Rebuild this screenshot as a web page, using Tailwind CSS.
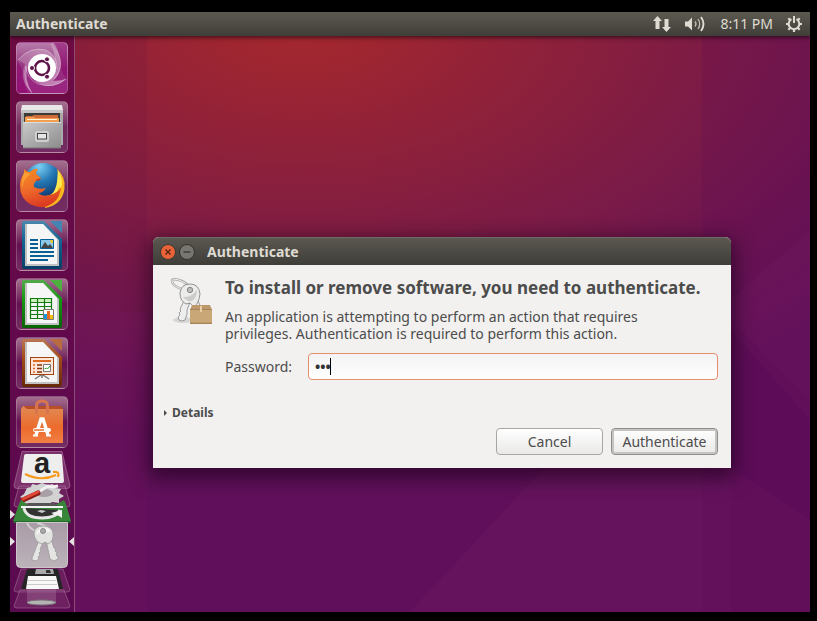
<!DOCTYPE html>
<html lang="en">
<head>
<meta charset="utf-8">
<meta name="viewport" content="width=device-width, initial-scale=1">
<title>Authenticate</title>
<script src="https://cdn.jsdelivr.net/npm/@tailwindcss/browser@4"></script>
</head>
<body class="bg-black font-['Noto_Sans','Open_Sans',sans-serif] text-sm text-[#4c4c4c]">
<div class="flex h-screen flex-col pt-3 pr-[7px] pb-[9px] pl-[10px]">
  <header class="relative z-10 flex h-6 shrink-0 items-center justify-between bg-linear-to-b from-[#5c5a50] to-[#403e39] pr-[7px] pl-1.5 text-[#dfdbd2] shadow-[0_1px_5px_rgba(0,0,0,.7)]">
    <h1 class="font-bold">Authenticate</h1>
    <div class="flex items-center">
      <button type="button" aria-label="Network" class="mr-3"><svg class="block h-5 w-5" viewBox="0 0 20 20" fill="currentColor"><path d="M5.500 2 10 7H7.500v8h-4V7H1zM14.500 18 10 13h2.500V5h4v8H19z"/></svg></button>
      <button type="button" aria-label="Sound" class="mr-3.5"><svg class="block h-5 w-[22px]" viewBox="0 0 22 20" fill="none" stroke="currentColor"><path fill="currentColor" stroke="none" d="M1 7.500h3l4-4v13l-4-4H1z"/><path stroke-width="1.300" d="M11 7.500q2 2.500 0 5M14 5q3.500 5 0 10" opacity=".8"/><path stroke-width="1.900" d="M17 3q5 7 0 14"/></svg></button>
      <time class="mr-3">8:11 PM</time>
      <button type="button" aria-label="Session menu"><svg class="block h-[18px] w-[18px]" viewBox="0 0 18 18" fill="none" stroke="currentColor"><path stroke-width="2" d="M6.500 4.200a5.300 5.300 0 1 0 5 0M9 1v7"/><path stroke-width="2.200" d="M3.800 9H1M17 9h-2.800M9 14v3M5.300 12.700l-2 2M12.700 12.700l2 2M5.300 5.300l-2-2M12.700 5.300l2-2"/></svg></button>
    </div>
  </header>

  <div class="relative flex min-h-0 grow overflow-hidden bg-[#60105a]">
    <svg class="absolute inset-0 h-full w-full" viewBox="10 36 800 576" preserveAspectRatio="none" aria-hidden="true">
      <defs>
        <radialGradient id="sky" gradientUnits="userSpaceOnUse" cx="0" cy="0" r="750" gradientTransform="translate(300 20) scale(1 .57)">
          <stop offset="0" stop-color="#a42730"/><stop offset=".1" stop-color="#9f2630"/><stop offset=".22" stop-color="#962336"/><stop offset=".4" stop-color="#881f3e"/><stop offset=".6" stop-color="#791a48"/><stop offset=".8" stop-color="#6b1453"/><stop offset="1" stop-color="#60105a"/>
        </radialGradient>
      </defs>
      <path fill="url(#sky)" d="M10 36h800v576H10z"/>
      <path fill="#5d0f45" fill-opacity=".13" d="M10 36h137v576H10z"/>
      <path fill="#8a1a70" fill-opacity=".14" d="M10 312h137v300H10z"/>
      <path fill="#550a55" fill-opacity=".15" d="M702 36h108v576H702z"/>
      <path fill="#80206a" fill-opacity=".18" d="M410 612 570 440 810 230V420L731 330V468L810 520V612z"/>
      <path fill="#5c0a58" fill-opacity=".22" d="M731 320 810 400V612H731z"/>
    </svg>

    <nav aria-label="Launcher" class="relative flex w-[65px] shrink-0 flex-col items-center border-r border-[#8c4a78] bg-linear-to-b from-[#6d0b41] via-[#62094c] to-[#5a0a50] pt-1.5">
      <div class="flex flex-col gap-[7px]">
        <button type="button" aria-label="Search your computer" class="block h-[52px] w-[52px] overflow-hidden rounded-[5px] border border-white/20 bg-linear-to-b from-[#b77caa] via-[#93307f] to-[#9b2380]">
          <svg class="block h-[50px] w-[50px]" viewBox="1 1 50 50"><defs><linearGradient id="swirl" x2="1" y2="1"><stop stop-color="#fff" stop-opacity=".1"/><stop offset="1" stop-color="#fff" stop-opacity=".5"/></linearGradient></defs><path fill="#8b0069" fill-opacity=".5" d="M38 1h13v36Q44 30 44 18 43 8 38 1zM1 18q6 10 8 20 0 8 3 13H1z"/><path fill="url(#swirl)" d="M2 18Q14 4 30 8 42 14 40 28L26 12Q14 12 12 26 8 36 16 51 2 38 9 22zM34 1Q50 16 42 33 34 46 20 40L38 32Q42 16 34 1zM50 37Q34 50 19 39L33 38Q42 40 50 37z"/><path fill="none" stroke="#fff" stroke-opacity=".35" d="M2 18Q14 4 30 8 42 14 41 27M36 1Q52 22 38 37M50 37Q38 47 22 42 10 36 10 24M10 24Q6 38 16 51"/><circle cx="26" cy="26" r="14" fill="#fff"/><circle cx="26" cy="26" r="7" fill="none" stroke="#5e1448" stroke-width="2.600"/><g fill="#5e1448" stroke="#fff" stroke-width="1"><circle cx="16" cy="26" r="2.500"/><circle cx="31" cy="17.300" r="2.500"/><circle cx="31" cy="34.700" r="2.500"/></g></svg>
        </button>
        <button type="button" aria-label="Files" class="block h-[52px] w-[52px] overflow-hidden rounded-[5px] border border-white/20 bg-linear-to-b from-[#a5708f] via-[#70285c] to-[#732d62]">
          <svg class="block h-[50px] w-[50px]" viewBox="1 1 50 50"><defs><linearGradient id="steel" x2="1" y2="1"><stop stop-color="#c9c9c9"/><stop offset="1" stop-color="#8c8c8c"/></linearGradient></defs><path fill="#aaa" d="M5 8h42v36H5z"/><path fill="#e8e8e8" d="M6 4h40l1 5H5z"/><path fill="#c5c5c5" d="M5 9h42v3H5z"/><path fill="#3c3c38" d="M8 12h36v11H8z"/><path fill="#d06a38" d="M10 15h6l2-1h24v7H10z"/><path fill="#f0a050" d="M9 16h9l1 1h24v5H9z"/><path stroke="#fff2d8" d="M11 18.500h30"/><path fill="url(#steel)" d="M7 22h38v25H7z"/><path stroke="#ddd" d="M7 21.500h38"/><path stroke="#777" d="M7 47h38"/><rect x="19" y="30" width="14" height="11" rx="2" fill="#cfcfcf"/><rect x="21.500" y="32.500" width="9" height="5.500" fill="#e6e6e6" stroke="#444"/></svg>
        </button>
        <button type="button" aria-label="Firefox" class="block h-[52px] w-[52px] overflow-hidden rounded-[5px] border border-white/20 bg-linear-to-b from-[#a5708f] via-[#70285c] to-[#732d62]">
          <svg class="block h-[50px] w-[50px]" viewBox="1 1 50 50"><defs><radialGradient id="globe" cx=".4" cy=".1" r=".9"><stop stop-color="#7ed0f4"/><stop offset=".45" stop-color="#2378b5"/><stop offset="1" stop-color="#0b2d63"/></radialGradient><linearGradient id="fox" y2="1" x2=".3"><stop stop-color="#f58a20"/><stop offset=".5" stop-color="#f0702a"/><stop offset="1" stop-color="#dd3c22"/></linearGradient></defs><circle cx="27" cy="22" r="19" fill="url(#globe)"/><path fill="#f9b51d" d="M41 9Q50 17 48.500 29Q46 45 29 48L30 36Q40 34 42 25Q43 15 41 9z"/><path fill="#ffe650" d="M42 10Q48 20 45 29L43 27Q41 35 34 37Q40 30 41 22z"/><path fill="url(#fox)" d="M8 9Q10 12 14 12Q18 8 22 9Q20 12 20 14L25 18Q24 20 20 21Q17 24 18 27Q23 30 30 28Q27 33 22 33Q26 37 34 35Q42 33 45 27Q44 38 37 43Q26 51 14 44Q4 38 4 26Q4 18 8 14z"/><path fill="#ffb13c" fill-opacity=".6" d="M8 12Q5 20 6 28Q8 18 15 14z"/><path fill="#c33c1a" d="M19 20l6-2-2 3z"/></svg>
        </button>
        <button type="button" aria-label="LibreOffice Writer" class="block h-[52px] w-[52px] overflow-hidden rounded-[5px] border border-white/20 bg-linear-to-b from-[#a5708f] via-[#651052] to-[#732d62]">
          <svg class="block h-[50px] w-[50px]" viewBox="1 1 50 50"><defs><linearGradient id="blue" x2="0" y2="1"><stop stop-color="#4b87ad"/><stop offset=".4" stop-color="#126594"/><stop offset="1" stop-color="#063f66"/></linearGradient></defs><path fill="url(#blue)" d="M8 2h20l18 18v28q0 2-2 2H8q-2 0-2-2V4q0-2 2-2z"/><path fill="#c2c2c2" d="M9 5h18l16 16v26H9z"/><path fill="#f6f6f6" d="M11 5h16l14 15v25H11z"/><path fill="#4384b3" d="M34 2h12v12z"/><path stroke="#086194" stroke-width="2" d="M14 21h8M14 25h8M14 29h8M14 33h24M14 37h24M14 41h18"/><path fill="#8bc8e5" stroke="#086194" d="M24.500 20.500h13v9h-13z"/><path fill="#444" d="m25 29 4-6 3 4 2-2 3 4z"/><path fill="#ecc830" d="M34 21h3v3h-2z"/></svg>
        </button>
        <button type="button" aria-label="LibreOffice Calc" class="block h-[52px] w-[52px] overflow-hidden rounded-[5px] border border-white/20 bg-linear-to-b from-[#a5708f] via-[#651052] to-[#732d62]">
          <svg class="block h-[50px] w-[50px]" viewBox="1 1 50 50"><defs><linearGradient id="green" x2="0" y2="1"><stop stop-color="#55a84c"/><stop offset=".4" stop-color="#159911"/><stop offset="1" stop-color="#086305"/></linearGradient></defs><path fill="url(#green)" d="M8 2h20l18 18v28q0 2-2 2H8q-2 0-2-2V4q0-2 2-2z"/><path fill="#c2c2c2" d="M9 5h18l16 16v26H9z"/><path fill="#f6f6f6" d="M11 5h16l14 15v25H11z"/><path fill="#4daf40" d="M34 2h12v12z"/><path fill="#cdf0bd" d="M14 20h22v5H14z"/><path fill="none" stroke="#107c0e" stroke-width="1.200" d="M14.500 20.500h21v20h-21zM21.500 20v21M28.500 20v21M14 24.500h22M14 28.500h22M14 32.500h22M14 36.500h22"/><path fill="#fff" stroke="#777" d="M27.500 31.500h10v10h-10z"/><path fill="#1999dc" d="M28 36h3v5h-3z"/><path fill="#e66a20" d="M31 33h3v8h-3z"/><path fill="#f4bf13" d="M34 37h3v4h-3z"/></svg>
        </button>
        <button type="button" aria-label="LibreOffice Impress" class="block h-[52px] w-[52px] overflow-hidden rounded-[5px] border border-white/20 bg-linear-to-b from-[#a5708f] via-[#651052] to-[#732d62]">
          <svg class="block h-[50px] w-[50px]" viewBox="1 1 50 50"><defs><linearGradient id="brown" x2="0" y2="1"><stop stop-color="#ba7653"/><stop offset=".4" stop-color="#a34a18"/><stop offset="1" stop-color="#642807"/></linearGradient></defs><path fill="url(#brown)" d="M8 2h20l18 18v28q0 2-2 2H8q-2 0-2-2V4q0-2 2-2z"/><path fill="#c2c2c2" d="M9 5h18l16 16v26H9z"/><path fill="#f6f6f6" d="M11 5h16l14 15v25H11z"/><path fill="#b86a40" d="M34 2h12v12z"/><path stroke="#777" stroke-width="1.500" d="m25 38-6 4M27 38l6 4M26 38v3"/><rect x="14.500" y="20.500" width="23" height="17" fill="#fde6d8" stroke="#a3440e"/><path stroke="#de6b23" stroke-width="2" d="M17 24h18"/><path stroke="#de6b23" stroke-width="1.500" d="M17 28h2M17 31.500h2M17 35h2"/><path stroke="#87350b" stroke-width="1.500" d="M21 28h5M21 31.500h5M21 35h5"/><path fill="#fff" stroke="#777" d="M27.500 27.500h7v7h-7z"/><path fill="none" stroke="#28a428" d="m28.500 32 2-1 1 1 2.500-3"/></svg>
        </button>
        <button type="button" aria-label="Ubuntu Software" class="block h-[52px] w-[52px] overflow-hidden rounded-[5px] border border-white/20 bg-linear-to-b from-[#a5708f] via-[#651052] to-[#732d62]">
          <svg class="block h-[50px] w-[50px]" viewBox="1 1 50 50"><defs><linearGradient id="bag" x2="0" y2="1"><stop stop-color="#e08a55"/><stop offset=".6" stop-color="#ed6b2c"/><stop offset="1" stop-color="#f08045"/></linearGradient></defs><path fill="#b94f28" d="M7 10h38l2 4H5z"/><path fill="url(#bag)" d="M5 13h42v34H5zM7 10l4 3H5z"/><path fill="none" stroke="#d87550" stroke-width="3" d="M20.500 18V10q0-5 5.500-5t5.500 5v8"/><path fill="none" stroke="#fff" stroke-width="3.500" d="m20 39 5-16h2l5 16"/><path stroke="#fff" stroke-width="4" stroke-linecap="round" d="M19 34h14"/><path stroke="#ed6b2c" stroke-width="1.300" d="M18 34h10"/><path stroke="#fff" stroke-width="2" d="M17 39.500h5M30 39.500h5"/></svg>
        </button>
      </div>
      <div class="mt-0.5 flex w-16 flex-col">
        <button type="button" aria-label="Amazon" class="relative block h-10"><svg class="block h-10 w-16 overflow-visible" viewBox="10 450 64 40"><path fill="#9a5588" fill-opacity=".5" stroke="#b07ba0" stroke-opacity=".6" d="M22 451.500h40l8 34q0 3-3 3H17q-3 0-3-3z"/><path fill="#eee" d="M26 454h35q1 0 1 2l2 25q0 2-2 2H23q-2 0-2-2l3-25q0-2 2-2z"/><text x="42" y="473" text-anchor="middle" font-family="Liberation Sans, sans-serif" font-weight="700" font-size="29" fill="#222">a</text><path fill="none" stroke="#f79a1c" stroke-width="2.200" d="M25 474q16 8 31 1M53 472q7-1 5 5"/></svg></button>
        <button type="button" aria-label="System Settings" class="relative -mt-2.5 block h-7"><svg class="block h-7 w-16" viewBox="10 480 64 28"><path fill="#8a4478" fill-opacity=".35" stroke="#b07ba0" stroke-opacity=".55" d="M19 486h46l5 18q0 3-3 3H17q-3 0-3-3z"/><path fill="#d2d2d2" d="m27 488 4-1 1-3 5 1 5-2 6 2 5-1 2 4 6 1-2 4 5 3-5 3v4l-7-1-5 4-6-2-6 2-5-3-7 1 1-5-4-2 4-3z"/><ellipse cx="44" cy="493" rx="9" ry="4" fill="#a8a0a6"/><path stroke="#8e1c16" stroke-width="5" stroke-linecap="round" d="m23 500 15-7"/><path stroke="#e14838" stroke-width="3" stroke-linecap="round" d="m23 499 15-7"/><path fill="none" stroke="#f2f2f2" stroke-width="3" d="m40 491 8-5 4 1 6-1"/></svg></button>
        <button type="button" aria-label="Software Updater" class="relative -mt-[11px] block h-[27px]"><svg class="block h-[27px] w-16" viewBox="10 497 64 27"><path fill="#37863a" d="m19 504 2-4 6 4h30l7-4 2 4 5 17H13z"/><path fill="#246c2b" d="M14 521h56l1 2H13z"/><path fill="#333" stroke="#e8e8e8" stroke-width="3" d="M24 508q2 10 18 10 14 0 18-8"/><path fill="#555" d="M30 503h24l7 4H23z"/><path fill="#ccc" d="m37 511 4-1 5 1-4 2z"/><path stroke="#f2f2f2" stroke-width="2" d="M21 507h42"/><path fill="#f2f2f2" d="m51 513 11-3v8l-3-2z"/><path fill="#e5e1e2" d="m10 510 5 4.500-5 4.500z"/></svg></button>
        <button type="button" aria-label="Authenticate window" class="relative -mt-0.5 block h-[46px]"><svg class="block h-[46px] w-16" viewBox="10 522 64 46"><defs><linearGradient id="active" x2="0" y2="1"><stop stop-color="#a99ba8"/><stop offset="1" stop-color="#bcb3b9"/></linearGradient></defs><path fill="url(#active)" stroke="#cec4cb" d="M16.500 522.500h51v41q0 4-4 4h-43q-4 0-4-4z"/><path fill="none" stroke="#d2cfd0" stroke-width="2" d="M46 531q-15 2-19-8M50 529q-8-5-13-6"/><path fill="#e4e4e2" stroke="#999" stroke-width=".8" d="m39 540-7 18v2l4 1 3-2-1-2 2-2-1-2 2-2-1-2 5-10zM46 540l4 19 4 2 4-2v-2l-2-2 1-2-2-2 1-2-2-1-3-9z"/><path fill="#e2e2e0" stroke="#999" stroke-width=".8" d="M34 534q0-8 9-8t10 7q1 8-5 11l-3-2-3 2q-7-2-8-10z"/><path fill="#f5f5f5" d="M36 535a8 8 0 0 1 15-3q-9-1-15 3z"/><circle cx="43" cy="531" r="2.500" fill="#aaa" stroke="#888"/><path fill="#e5e1e2" d="m10 537 5 4.500-5 4.500zM74 537l-5 4.500 5 4.500z"/></svg></button>
        <button type="button" aria-label="Floppy disk" class="relative block h-[25px]"><svg class="block h-[25px] w-16" viewBox="10 568 64 25"><path fill="#8a4478" fill-opacity=".35" stroke="#b07ba0" stroke-opacity=".5" d="M21 569h42l7 21q0 2-3 2H17q-3 0-3-2z"/><path fill="#262626" d="M27 569h31l5 20H21z"/><path fill="#aaa" d="M36 569h17l1 5H35z"/><path fill="#333" d="M46 570h4l1 3h-5z"/><path fill="#f8f8f6" d="M28 576h28l3 13H26z"/><path stroke="#ccc" d="M28 580.500h28M27 584.500h30"/></svg></button>
        <button type="button" aria-label="Trash" class="relative -mt-1 block h-5"><svg class="block h-5 w-16" viewBox="10 589 64 20"><path fill="#8a4478" fill-opacity=".4" stroke="#b07ba0" stroke-opacity=".5" d="M20 590h44l6 16q0 2-3 2H17q-3 0-3-2z"/><path fill="#b78aad" fill-opacity=".3" d="M27 589h29v14H27z"/><ellipse cx="41.500" cy="602.500" rx="14.500" ry="2.500" fill="#b5b2b4" stroke="#77707a"/></svg></button>
      </div>
    </nav>

    <main class="relative grow">
      <section role="dialog" aria-labelledby="dialog-title" class="absolute top-[201px] left-[78px] w-[578px] rounded-t-md bg-[#f2f1f0] shadow-[0_6px_20px_4px_rgba(20,0,20,.6)]">
        <div class="flex h-7 items-center rounded-t-md border-t border-[#6d6b63] bg-linear-to-b from-[#5a5850] to-[#3f3d38] pl-[7px] text-[#dfdbd2]">
          <button type="button" aria-label="Close" class="mr-[3px]"><svg class="block h-4 w-4" viewBox="0 0 16 16"><circle cx="8" cy="8" r="7.500" fill="#ea6238" stroke="#3a3834"/><path stroke="#4a2014" stroke-width="1.200" d="m5.500 5.500 5 5M10.500 5.500l-5 5"/></svg></button>
          <button type="button" aria-label="Minimize" class="mr-3"><svg class="block h-4 w-4" viewBox="0 0 16 16"><circle cx="8" cy="8" r="7.500" fill="#777670" stroke="#33322e"/><path stroke="#33322e" stroke-width="1.200" d="M4.500 8h7"/></svg></button>
          <h2 id="dialog-title" class="font-bold">Authenticate</h2>
        </div>
        <form class="pt-[11px] pr-[13px] pb-[13px] pl-[11px]">
          <div class="flex">
            <svg class="mr-3 h-[50px] w-[49px] shrink-0" viewBox="164 276 49 50" aria-hidden="true"><ellipse cx="183" cy="320" rx="10" ry="3" fill="#bbb" opacity=".5"/><path fill="none" stroke="#a8a8a4" stroke-width="2.400" d="M189 287q-3-5-10-7-7-2-7 1 0 4 7 7 4 2 9 1"/><path fill="none" stroke="#eee" d="M189 287q-3-5-10-7-7-2-7 1 0 4 7 7 4 2 9 1"/><path fill="#eee" stroke="#888" stroke-width=".8" d="m184 301-3 6-1 3 1 1-2 2 1 2-2 2 1 3 3 1 3-1 2-6v-4l3-8zM192 300l8 18h5l-8-20z"/><path fill="#ececea" stroke="#888" stroke-width=".9" d="M180 293q1-9 10-9t10 10q-1 9-6 13l-4-4-4 1q-6-3-6-11z"/><path fill="#ccc" d="M183 297q8 1 14-7 0 8-5 11-5 1-9-4z"/><circle cx="190" cy="290" r="2.700" fill="#bbb" stroke="#888"/><path fill="#bd986a" d="m192 305h18l2 5v14h-22v-14z"/><path fill="#caa777" d="M190 310h22v12h-22z"/><path stroke="#a7855a" d="M190 309.500h22M190 323.500h22"/><path stroke="#e8cfa8" stroke-width="2" d="M201 306v6"/></svg>
            <div class="grow">
              <h3 class="text-[17px] leading-6 font-bold">To install or remove software, you need to authenticate.</h3>
              <p class="mt-2 leading-[17px]">An application is attempting to perform an action that requires<br>privileges. Authentication is required to perform this action.</p>
              <div class="mt-[11px] flex items-center">
                <label for="password" class="w-[83px]">Password:</label>
                <div class="relative grow">
                  <input id="password" type="password" value="abc" class="block h-[27px] w-full rounded-[4px] border border-[#e58f6e] bg-linear-to-b from-[#f3f3f3] to-white px-1.5 font-bold text-[#333] outline-none">
                  <span class="absolute top-[5px] left-[22px] h-[17px] w-px bg-black"></span>
                </div>
              </div>
            </div>
          </div>
          <button type="button" aria-expanded="false" class="mt-[25px] flex h-4 items-center gap-[5px] text-xs font-bold"><svg class="block h-1.5 w-[3px]" viewBox="0 0 3 6" fill="currentColor"><path d="m0 0 3 3-3 3z"/></svg>Details</button>
          <div class="mt-[7px] flex justify-end gap-2">
            <button type="button" class="h-[27px] w-[107px] rounded-[4px] border border-[#a9a7a4] bg-linear-to-b from-white to-[#eae9e8]">Cancel</button>
            <button type="submit" class="h-[27px] w-[107px] rounded-[4px] border border-[#8f8e8c] bg-linear-to-b from-white to-[#eae9e8] shadow-[inset_0_0_0_2px_#c4c4c4]">Authenticate</button>
          </div>
        </form>
      </section>
    </main>
  </div>
</div>
</body>
</html>
